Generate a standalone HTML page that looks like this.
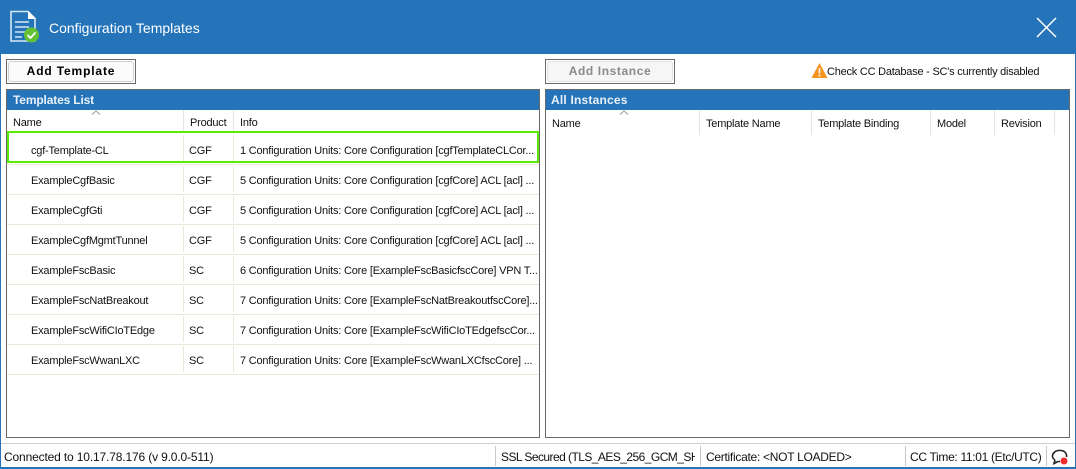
<!DOCTYPE html>
<html><head><meta charset="utf-8">
<style>
html,body{margin:0;padding:0;width:1076px;height:469px;overflow:hidden;background:#fff}
body{position:relative;font-family:"Liberation Sans",sans-serif;font-size:12px;color:#111}
.a{position:absolute}
.t{position:absolute;white-space:nowrap;line-height:14px;font-size:11px;letter-spacing:-.21px}
.hs{position:absolute;width:1px;background:#e4e4e4}
.rs{position:absolute;height:1px;background:#ece8dc}
.cs{position:absolute;width:1px;height:26px;background:#ece8dc}
</style></head><body>
<div class="a" style="left:0;top:0;width:1076px;height:54px;background:#2574b9"></div>
<div class="a" style="left:0;top:54px;width:1px;height:415px;background:#2574b9"></div>
<div class="a" style="left:1075px;top:54px;width:1px;height:415px;background:#2574b9"></div>
<div class="a" style="left:0;top:467px;width:1076px;height:2px;background:#2574b9"></div>
<svg class="a" style="left:8px;top:9px" width="34" height="36" viewBox="0 0 34 36">
<path d="M3 2.500H20L27 9.500V32H3Z" fill="#2574b9" stroke="#d6e6f4" stroke-width="1.600"/>
<path d="M20 2V10H28Z" fill="#fff"/>
<path d="M7 13H21M7 18H21M7 23H17M7 28H14" stroke="#d6e6f4" stroke-width="1.400" fill="none"/>
<circle cx="23.500" cy="26" r="7.500" fill="#62c234"/>
<path d="M19.500 26L22.500 29L27.500 23.500" stroke="#fff" stroke-width="1.800" fill="none"/>
</svg>
<div class="t" style="left:49px;top:21px;font-size:14px;letter-spacing:0;color:#fff">Configuration Templates</div>
<svg class="a" style="left:1036px;top:17px" width="21" height="21" viewBox="0 0 21 21"><path d="M1 1L20 20M20 1L1 20" stroke="#fff" stroke-width="1.500" fill="none"/></svg>

<div class="a" style="left:6px;top:59px;width:128px;height:23px;border:1px solid #696969"></div>
<div class="a" style="left:8px;top:61px;width:124px;height:19px;border:1px solid #d0d0d0;border-radius:3px;background:#fbfbfb"></div>
<div class="t" style="left:6px;top:64px;width:130px;text-align:center;font-size:12px;font-weight:bold;letter-spacing:.85px;color:#000">Add Template</div>

<div class="a" style="left:545px;top:59px;width:128px;height:23px;border:1px solid #696969"></div>
<div class="a" style="left:547px;top:61px;width:124px;height:19px;border:1px solid #e2e2e2;border-radius:3px;background:#f6f6f6"></div>
<div class="t" style="left:545px;top:64px;width:130px;text-align:center;font-size:12px;font-weight:bold;letter-spacing:.6px;color:#8a8a8a">Add Instance</div>

<svg class="a" style="left:811px;top:62px" width="17" height="17" viewBox="0 0 17 17"><path d="M8.500 1L16.500 16H.5Z" fill="#f7941d"/><path d="M8.500 6V11.500M8.500 12.700V14.500" stroke="#fff" stroke-width="1.600"/></svg>
<div class="t" style="left:827px;top:65px;letter-spacing:-.23px">Check CC Database - SC's currently disabled</div>

<div class="a" style="left:6px;top:89px;width:532px;height:347px;border:1px solid #696969"></div>
<div class="a" style="left:7px;top:90px;width:532px;height:20px;background:#2574b9"></div>
<div class="t" style="left:13px;top:93px;font-size:12px;letter-spacing:-.15px;font-weight:bold;color:#e8f1f9">Templates List</div>
<svg class="a" style="left:91px;top:110px" width="10" height="6"><path d="M1 4.500L5 1L9 4.500" stroke="#999" fill="none"/></svg>
<div class="t" style="left:13px;top:116px">Name</div>
<div class="t" style="left:190px;top:116px">Product</div>
<div class="t" style="left:240px;top:116px">Info</div>
<div class="hs" style="left:183px;top:110px;height:21px"></div>
<div class="hs" style="left:233px;top:110px;height:21px"></div>

<div class="rs" style="left:7px;top:164px;width:532px"></div>
<div class="rs" style="left:7px;top:194px;width:532px"></div>
<div class="rs" style="left:7px;top:224px;width:532px"></div>
<div class="rs" style="left:7px;top:254px;width:532px"></div>
<div class="rs" style="left:7px;top:284px;width:532px"></div>
<div class="rs" style="left:7px;top:314px;width:532px"></div>
<div class="rs" style="left:7px;top:344px;width:532px"></div>
<div class="rs" style="left:7px;top:374px;width:532px"></div>
<div class="cs" style="left:183px;top:135px"></div><div class="cs" style="left:233px;top:135px"></div>
<div class="cs" style="left:183px;top:166px"></div><div class="cs" style="left:233px;top:166px"></div>
<div class="cs" style="left:183px;top:196px"></div><div class="cs" style="left:233px;top:196px"></div>
<div class="cs" style="left:183px;top:226px"></div><div class="cs" style="left:233px;top:226px"></div>
<div class="cs" style="left:183px;top:256px"></div><div class="cs" style="left:233px;top:256px"></div>
<div class="cs" style="left:183px;top:286px"></div><div class="cs" style="left:233px;top:286px"></div>
<div class="cs" style="left:183px;top:316px"></div><div class="cs" style="left:233px;top:316px"></div>
<div class="cs" style="left:183px;top:346px"></div><div class="cs" style="left:233px;top:346px"></div>

<div class="t" style="left:31px;top:144px">cgf-Template-CL</div><div class="t" style="left:189px;top:144px">CGF</div><div class="t" style="left:240px;top:144px">1 Configuration Units: Core Configuration [cgfTemplateCLCor...</div>
<div class="t" style="left:31px;top:174px">ExampleCgfBasic</div><div class="t" style="left:189px;top:174px">CGF</div><div class="t" style="left:240px;top:174px">5 Configuration Units: Core Configuration [cgfCore] ACL [acl] ...</div>
<div class="t" style="left:31px;top:204px">ExampleCgfGti</div><div class="t" style="left:189px;top:204px">CGF</div><div class="t" style="left:240px;top:204px">5 Configuration Units: Core Configuration [cgfCore] ACL [acl] ...</div>
<div class="t" style="left:31px;top:234px">ExampleCgfMgmtTunnel</div><div class="t" style="left:189px;top:234px">CGF</div><div class="t" style="left:240px;top:234px">5 Configuration Units: Core Configuration [cgfCore] ACL [acl] ...</div>
<div class="t" style="left:31px;top:264px">ExampleFscBasic</div><div class="t" style="left:189px;top:264px">SC</div><div class="t" style="left:240px;top:264px">6 Configuration Units: Core [ExampleFscBasicfscCore] VPN T...</div>
<div class="t" style="left:31px;top:294px">ExampleFscNatBreakout</div><div class="t" style="left:189px;top:294px">SC</div><div class="t" style="left:240px;top:294px">7 Configuration Units: Core [ExampleFscNatBreakoutfscCore]...</div>
<div class="t" style="left:31px;top:324px">ExampleFscWifiCIoTEdge</div><div class="t" style="left:189px;top:324px">SC</div><div class="t" style="left:240px;top:324px">7 Configuration Units: Core [ExampleFscWifiCIoTEdgefscCor...</div>
<div class="t" style="left:31px;top:354px">ExampleFscWwanLXC</div><div class="t" style="left:189px;top:354px">SC</div><div class="t" style="left:240px;top:354px">7 Configuration Units: Core [ExampleFscWwanLXCfscCore] ...</div>

<div class="a" style="left:7px;top:131px;width:528px;height:28px;border:2px solid #58ec00"></div>

<div class="a" style="left:545px;top:89px;width:523px;height:347px;border:1px solid #696969"></div>
<div class="a" style="left:546px;top:90px;width:523px;height:20px;background:#2574b9"></div>
<div class="t" style="left:551px;top:93px;font-size:12px;letter-spacing:.2px;font-weight:bold;color:#e8f1f9">All Instances</div>
<svg class="a" style="left:619px;top:110px" width="10" height="6"><path d="M1 4.500L5 1L9 4.500" stroke="#999" fill="none"/></svg>
<div class="t" style="left:552px;top:117px">Name</div>
<div class="t" style="left:706px;top:117px">Template Name</div>
<div class="t" style="left:818px;top:117px">Template Binding</div>
<div class="t" style="left:937px;top:117px">Model</div>
<div class="t" style="left:1001px;top:117px">Revision</div>
<div class="hs" style="left:699px;top:110px;height:25px"></div>
<div class="hs" style="left:811px;top:110px;height:25px"></div>
<div class="hs" style="left:930px;top:110px;height:25px"></div>
<div class="hs" style="left:994px;top:110px;height:25px"></div>
<div class="hs" style="left:1054px;top:110px;height:25px"></div>

<div class="a" style="left:1px;top:443px;width:1074px;height:1px;background:#cfcfcf"></div>
<div class="hs" style="left:495px;top:446px;height:20px;background:#c8c8c8"></div>
<div class="hs" style="left:700px;top:446px;height:20px;background:#c8c8c8"></div>
<div class="hs" style="left:905px;top:446px;height:20px;background:#c8c8c8"></div>
<div class="hs" style="left:1046px;top:446px;height:20px;background:#c8c8c8"></div>
<div class="t" style="left:4px;top:450px;font-size:12px;letter-spacing:-.15px">Connected to 10.17.78.176 (v 9.0.0-511)</div>
<div class="a" style="left:501px;top:448px;width:194px;height:18px;overflow:hidden"><div class="t" style="left:0;top:2px;font-size:12px;letter-spacing:-.55px">SSL Secured (TLS_AES_256_GCM_SHA384)</div></div>
<div class="t" style="left:706px;top:450px;font-size:12px;letter-spacing:-.28px">Certificate: &lt;NOT LOADED&gt;</div>
<div class="t" style="left:910px;top:450px;font-size:12px;letter-spacing:-.32px">CC Time: 11:01 (Etc/UTC)</div>
<svg class="a" style="left:1051px;top:449px" width="18" height="16" viewBox="0 0 18 16"><path d="M4 11C1.500 9.500 1 7 2 5C3.500 2 7 1 10 1.500C14 2 16 4.500 15.500 8M4 11L3 14.500L7 12.500H9" stroke="#222" stroke-width="1.600" fill="none"/><circle cx="13" cy="12" r="3.500" fill="#f02b2b"/></svg>
</body></html>
